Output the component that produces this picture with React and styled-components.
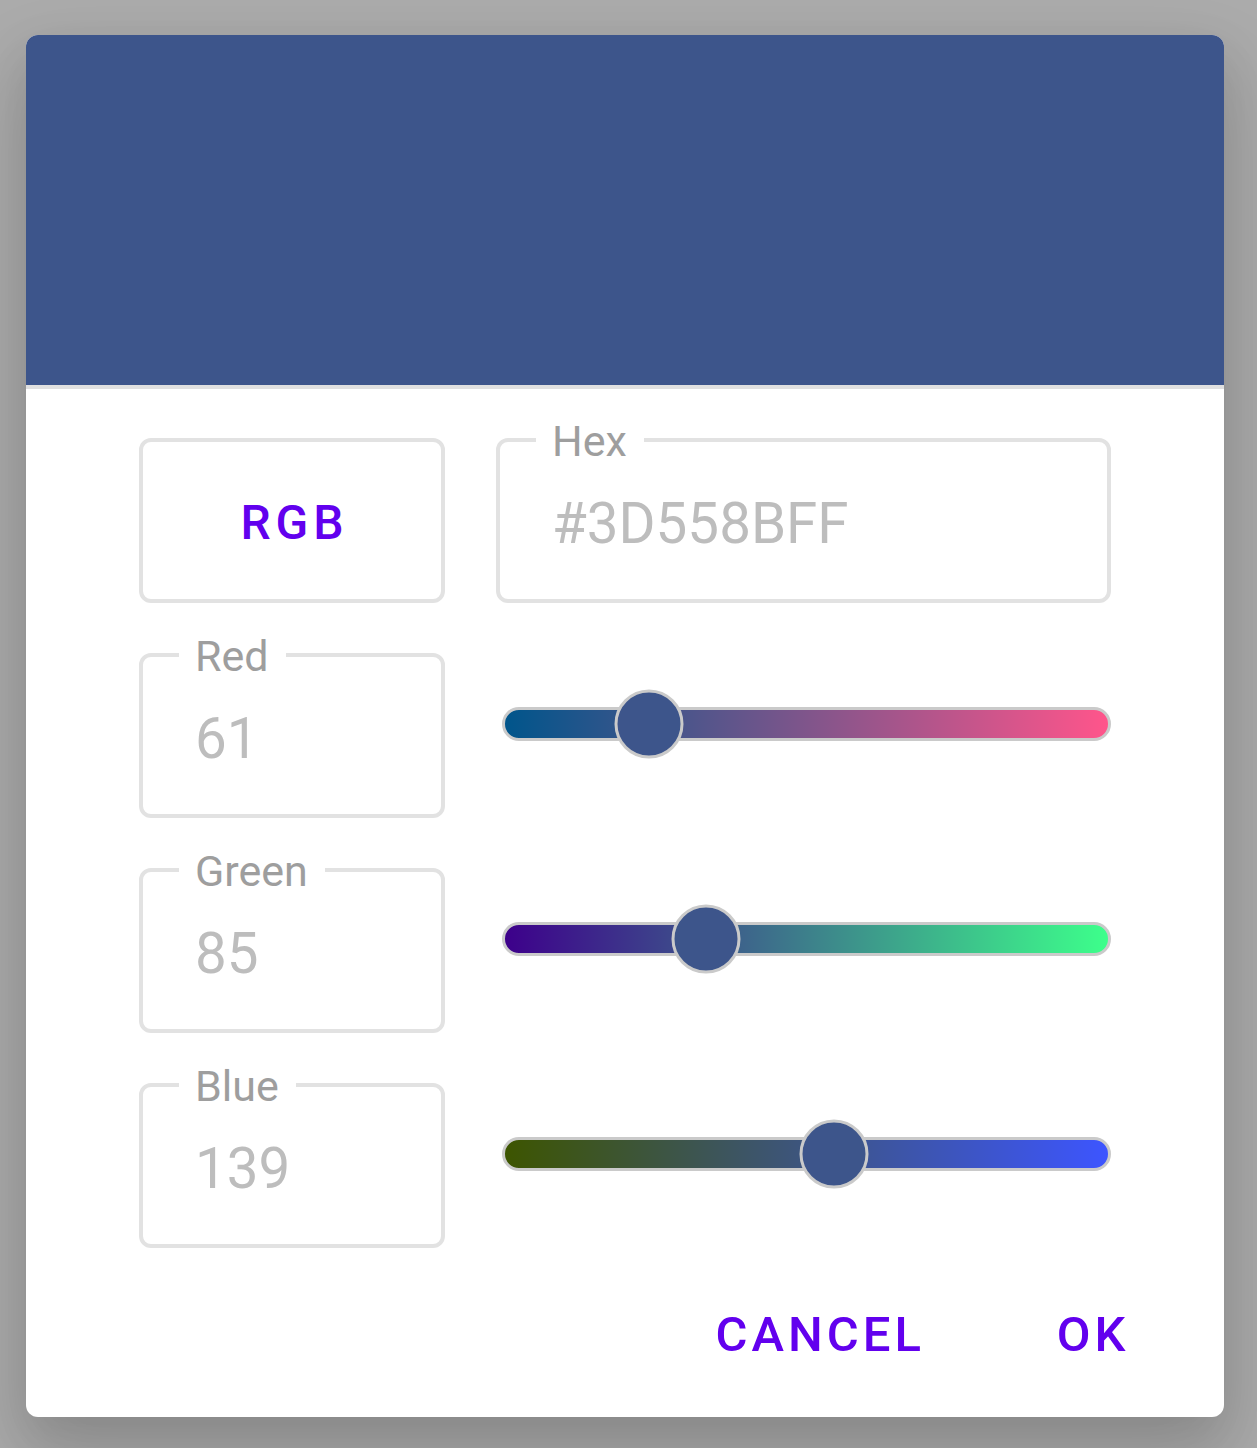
import React from "react";
import styled, { createGlobalStyle } from "styled-components";

const GlobalStyle = createGlobalStyle`
  html, body {
    margin: 0;
    padding: 0;
    background: #ababab;
    font-family: Roboto, "Liberation Sans", sans-serif;
  }
`;

const Page = styled.div`
  padding: 35px 33px 31px 26px;
`;

const Card = styled.div`
  width: 1198px;
  height: 1382px;
  background: #fff;
  border-radius: 12px;
  overflow: hidden;
  display: flex;
  flex-direction: column;
  box-shadow: 0 40px 80px 10px rgba(0, 0, 0, 0.12),
    0 20px 50px rgba(0, 0, 0, 0.1);
`;

const Preview = styled.div`
  height: 350px;
  flex: none;
  background: ${(p) => p.color};
  border-bottom: 4px solid #e0e0e0;
`;

const Body = styled.div`
  padding: 49px 113px 0;
  display: grid;
  grid-template-columns: 306px 1fr;
  grid-auto-rows: 165px;
  column-gap: 51px;
  row-gap: 50px;
`;

const ModeBox = styled.div`
  box-sizing: border-box;
  border: 4px solid #e2e2e2;
  border-radius: 12px;
  display: flex;
  align-items: center;
  justify-content: center;
  color: #6200ee;
  font-size: 48px;
  font-weight: 500;
  letter-spacing: 5px;
  padding: 4px 0 0 5px;
`;

const Field = styled.div`
  position: relative;
  box-sizing: border-box;
  border: 4px solid #e2e2e2;
  border-radius: 12px;
  display: flex;
  align-items: center;
  padding: 6px 0 0 52px;
`;

const Label = styled.span`
  position: absolute;
  top: -22px;
  left: 36px;
  padding: 0 17px 0 16px;
  background: #fff;
  font-size: 43px;
  line-height: 43px;
  color: #9e9e9e;
`;

const Value = styled.span`
  font-size: 56.5px;
  color: #bdbdbd;
`;

const SliderCell = styled.div`
  padding: 54px 0 0 6px;
`;

const Track = styled.div`
  position: relative;
  box-sizing: border-box;
  height: 34px;
  border: 3px solid #cacaca;
  border-radius: 17px;
  background: linear-gradient(to right, ${(p) => p.from}, ${(p) => p.to});
`;

const Thumb = styled.div`
  position: absolute;
  top: 50%;
  width: 69px;
  height: 69px;
  box-sizing: border-box;
  border: 3px solid #cacaca;
  border-radius: 50%;
  background: ${(p) => p.color};
  transform: translate(-50%, -50%);
`;

const Footer = styled.div`
  display: flex;
  justify-content: flex-end;
  gap: 26px;
  padding: 23px 21px 20px;
`;

const TextButton = styled.button`
  height: 126px;
  min-width: 224px;
  padding: 0 28px 0 32px;
  border: none;
  background: none;
  font-family: Roboto, "Liberation Sans", sans-serif;
  font-size: 49px;
  font-weight: 500;
  letter-spacing: 4px;
  color: #6200ee;
`;

const COLOR = "#3D558B";
const r = 61;
const g = 85;
const b = 139;

const channels = [
  { label: "Red", value: r, from: `rgb(0,${g},${b})`, to: `rgb(255,${g},${b})` },
  { label: "Green", value: g, from: `rgb(${r},0,${b})`, to: `rgb(${r},255,${b})` },
  { label: "Blue", value: b, from: `rgb(${r},${g},0)`, to: `rgb(${r},${g},255)` },
];

export default function App() {
  return (
    <Page>
      <GlobalStyle />
      <Card>
        <Preview color={COLOR} />
        <Body>
          <ModeBox>RGB</ModeBox>
          <Field>
            <Label>Hex</Label>
            <Value>#3D558BFF</Value>
          </Field>
          {channels.map((c) => (
            <React.Fragment key={c.label}>
              <Field>
                <Label>{c.label}</Label>
                <Value>{c.value}</Value>
              </Field>
              <SliderCell>
                <Track from={c.from} to={c.to}>
                  <Thumb color={COLOR} style={{ left: `${(c.value / 255) * 100}%` }} />
                </Track>
              </SliderCell>
            </React.Fragment>
          ))}
        </Body>
        <Footer>
          <TextButton>CANCEL</TextButton>
          <TextButton>OK</TextButton>
        </Footer>
      </Card>
    </Page>
  );
}
